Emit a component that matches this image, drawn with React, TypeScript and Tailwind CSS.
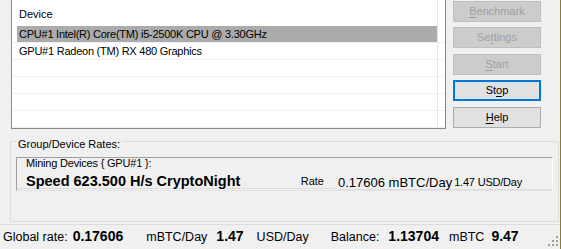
const font = "font-['Liberation_Sans',Arial,sans-serif]";

const devices = ["CPU#1 Intel(R) Core(TM) i5-2500K CPU @ 3.30GHz", "GPU#1 Radeon (TM) RX 480 Graphics", "", "", "", ""];

type BtnProps = { pre: string; u: string; post: string; kind: "disabled" | "focused" | "normal"; mt: string };

function Btn({ pre, u, post, kind, mt }: BtnProps) {
  const look =
    kind === "disabled"
      ? "bg-[#cccccc] border border-[#bfbfbf] text-[#a0a0a0]"
      : kind === "focused"
        ? "bg-[#e1e1e1] border-2 border-[#0078d7] text-black"
        : "bg-[#e1e1e1] border border-[#adadad] text-black";
  return (
    <div className={`${mt} h-[21px] w-[88px] flex items-center justify-center text-[11px] leading-[13px] ${look}`}>
      <span>
        {pre}
        <span className="underline underline-offset-[2px]">{u}</span>
        {post}
      </span>
    </div>
  );
}

function DeviceList() {
  return (
    <div className="ml-[11px] w-[435px] h-[129px] border border-t-0 border-[#828790] bg-white flex flex-col">
      <div className="flex h-[26px]">
        <div className="w-[426px] border-r border-[#e5e5e5] pl-[7px] pt-[8px] text-[11px] leading-[13px] text-black">Device</div>
        <div className="flex-1" />
      </div>
      {devices.map((d, i) => (
        <div key={i} className="flex h-[17px] border-b border-[#f0f0f0]">
          <div className="w-[426px] border-r border-[#e5e5e5] pl-[5px]">
            <div
              className={`h-[16px] pl-[2px] pt-[2px] text-[11px] leading-[13px] tracking-[-0.24px] text-black ${i === 0 ? "bg-[#ababab]" : ""}`}
            >
              {d}
            </div>
          </div>
          <div className="flex-1" />
        </div>
      ))}
    </div>
  );
}

function SizeGrip() {
  const dots = [
    [8, 0],
    [4, 4],
    [8, 4],
    [0, 8],
    [4, 8],
    [8, 8],
  ];
  return (
    <svg width="10" height="10" viewBox="0 0 10 10" className="mr-[2px] mt-[11px]">
      {dots.map(([x, y], i) => (
        <rect key={i} x={x} y={y} width="2" height="2" fill="#a0a0a0" />
      ))}
    </svg>
  );
}

export default function App() {
  return (
    <div className={`w-[561px] h-[249px] bg-[#f0f0f0] border-r border-[#8b7b3b] flex flex-col overflow-hidden ${font}`}>
      <div className="flex h-[129px]">
        <DeviceList />
        <div className="ml-[7px] flex flex-col">
          <Btn pre="" u="B" post="enchmark" kind="disabled" mt="mt-[1px]" />
          <Btn pre="Se" u="t" post="tings" kind="disabled" mt="mt-[5px]" />
          <Btn pre="" u="S" post="tart" kind="disabled" mt="mt-[6px]" />
          <Btn pre="St" u="o" post="p" kind="focused" mt="mt-[5px]" />
          <Btn pre="" u="H" post="elp" kind="normal" mt="mt-[6px]" />
        </div>
      </div>

      <div className="relative mt-[12px] ml-[10px] w-[549px] h-[81px] border border-[#dcdcdc]">
        <div className="absolute -top-[4px] left-[5px] px-[2px] bg-[#f0f0f0] text-[11px] leading-[13px] text-black">Group/Device Rates:</div>
        <div className="mt-[15px] ml-[5px] w-[537px] h-[34px] border-t border-l border-t-[#a0a0a0] border-l-[#a0a0a0] border-r border-b border-r-[#ffffff] border-b-[#e3e3e3] flex flex-col">
          <div className="-mt-[1px] pl-[9px] text-[11px] leading-[13px] tracking-[-0.2px] text-black">Mining Devices {"{"} GPU#1 {"}"}:</div>
          <div className="flex items-start h-[19px]">
            <div className="w-[228px] h-[19px] border-b border-[#dcdcdc] pl-[9px] flex items-end">
              <span className="text-[14.5px] leading-[13px] font-bold text-black whitespace-nowrap">Speed 623.500 H/s CryptoNight</span>
            </div>
            <div className="ml-[1px] w-[89px] h-[19px] border-b border-[#dcdcdc] pr-[11px] flex items-end justify-end pb-[1px]">
              <span className="text-[11px] leading-[11px] text-black">Rate</span>
            </div>
            <div className="ml-[3px] w-[214px] h-[20px] border-b border-[#dcdcdc] flex items-end">
              <span className="text-[13px] leading-[12px] text-black whitespace-nowrap">0.17606 mBTC/Day</span>
              <span className="ml-[2px] text-[11px] leading-[11px] pb-[1px] tracking-[-0.2px] text-black whitespace-nowrap">1.47 USD/Day</span>
            </div>
          </div>
        </div>
      </div>

      <div className="mt-[2px] h-[25px] border-t border-[#dcdcdc] flex items-start text-black whitespace-nowrap">
        <div className="flex items-baseline pt-[3px] leading-[16px]">
          <span className="ml-[3px] text-[12.5px]">Global rate:</span>
          <span className="ml-[5px] text-[14px] font-bold">0.17606</span>
          <span className="ml-[23px] text-[12.5px]">mBTC/Day</span>
          <span className="ml-[9px] text-[14px] font-bold">1.47</span>
          <span className="ml-[13px] text-[12.5px]">USD/Day</span>
          <span className="ml-[22px] text-[12.5px]">Balance:</span>
          <span className="ml-[9px] text-[14px] font-bold">1.13704</span>
          <span className="ml-[10px] text-[12.5px]">mBTC</span>
          <span className="ml-[7px] text-[14px] font-bold">9.47</span>
        </div>
        <div className="ml-auto">
          <SizeGrip />
        </div>
      </div>
    </div>
  );
}
